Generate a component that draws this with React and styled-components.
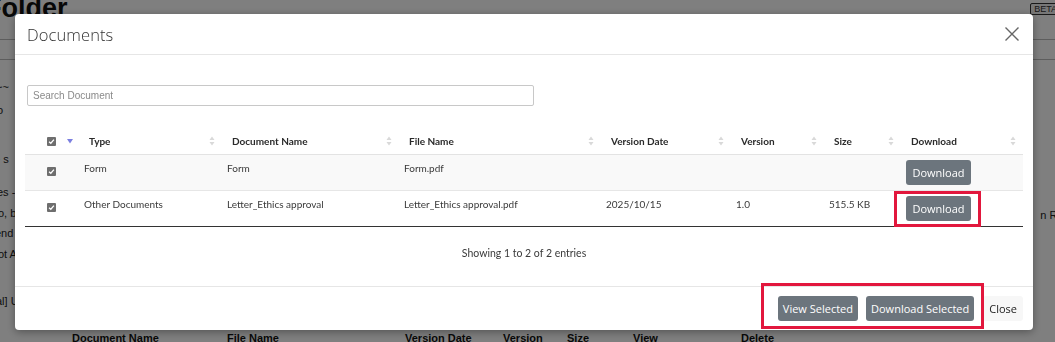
import React from "react";
import styled, { createGlobalStyle } from "styled-components";

const Global = createGlobalStyle`
  html, body { margin: 0; padding: 0; background: #fff; }
  body { font-family: "Liberation Sans", Arial, sans-serif; overflow: hidden; }
  * { box-sizing: border-box; }
`;

/* ---------- background page ---------- */
const Page = styled.div`
  width: 1055px;
  height: 342px;
  overflow: hidden;
  display: flex;
  flex-direction: column;
  background: #fff;
  color: #222;
`;
const TopBar = styled.div`
  height: 40px;
  flex: none;
  display: flex;
  justify-content: space-between;
  align-items: flex-start;
  border-bottom: 1px solid #bbb;
`;
const PageTitle = styled.h1`
  margin: -5px 0 0 -15px;
  font-size: 27px;
  line-height: 1;
  font-weight: 700;
  color: #111;
`;
const Beta = styled.span`
  margin: 3px -6px 0 0;
  padding: 0 3px;
  height: 12px;
  font-size: 9px;
  line-height: 11px;
  border: 1px solid #333;
  border-radius: 2px;
  color: #333;
  background: #eee;
`;
const SubBar = styled.div`
  height: 20px;
  flex: none;
  border-bottom: 1px solid #bbb;
`;
const Content = styled.div`
  flex: 1;
  display: flex;
  justify-content: space-between;
`;
const LeftCol = styled.div`
  display: flex;
  flex-direction: column;
  font-size: 11px;
  line-height: 13px;
`;
const Frag = styled.div`
  margin-top: ${(p) => p.$gap}px;
  margin-left: ${(p) => p.$shift || 0}px;
  white-space: nowrap;
  color: #222;
`;
const RightCol = styled.div`
  padding-top: 149px;
  font-size: 11px;
  margin-right: -17px;
  white-space: nowrap;
`;
const BgTableHead = styled.div`
  height: 14px;
  flex: none;
  display: flex;
  padding-left: 72px;
  font-size: 11px;
  font-weight: 700;
  color: #111;
  margin-bottom: -4px;
`;
const BgTh = styled.div`
  width: ${(p) => p.$w}px;
  flex: none;
  white-space: nowrap;
`;

/* ---------- modal ---------- */
const Overlay = styled.div`
  position: fixed;
  inset: 0;
  background: rgba(0, 0, 0, 0.5);
`;
const Modal = styled.div`
  margin: 14px 0 0 15px;
  width: 1018px;
  height: 316px;
  background: #fff;
  border-radius: 4px;
  box-shadow: 0 2px 8px rgba(0, 0, 0, 0.35);
  display: flex;
  flex-direction: column;
`;
const Header = styled.div`
  height: 41px;
  flex: none;
  display: flex;
  align-items: center;
  justify-content: space-between;
  padding: 0 13px 0 12px;
  border-bottom: 1px solid #e6e6e6;
`;
const Title = styled.h2`
  margin: 0;
  font-family: "Open Sans", sans-serif;
  font-weight: 300;
  font-size: 16.5px;
  color: #333;
  letter-spacing: 0.1px;
`;
const CloseX = styled.button`
  border: 0;
  background: none;
  padding: 0;
  width: 16px;
  height: 16px;
  display: flex;
  cursor: pointer;
`;
const Body = styled.div`
  height: 231px;
  flex: none;
  padding: 30px 10px 0;
  display: flex;
  flex-direction: column;
`;
const Search = styled.input`
  margin-left: 2px;
  width: 507px;
  height: 21px;
  border: 1px solid #c8c8c8;
  border-radius: 2px;
  padding: 0 5px;
  font-family: "Liberation Sans", Arial, sans-serif;
  font-size: 10px;
  color: #333;
  outline: none;
  &::placeholder { color: #8a8a8a; }
`;
const Table = styled.table`
  margin-top: 23px;
  width: 998px;
  table-layout: fixed;
  border-collapse: collapse;
  font-family: "Lato", sans-serif;
  font-size: 10px;
  color: #3a3a3a;
  border-bottom: 1px solid #333;
`;
const Th = styled.th`
  height: 25px;
  padding: 0 7px 0 10px;
  text-align: left;
  font-weight: 700;
  color: #2a2a2a;
  border-bottom: 1px solid #e3e3e3;
`;
const CheckTh = styled(Th)`
  padding: 0 0 0 22px;
`;
const ThInner = styled.div`
  display: flex;
  align-items: center;
  justify-content: space-between;
`;
const CheckInner = styled.div`
  display: flex;
  align-items: center;
  gap: 11px;
`;
const Tr = styled.tr`
  background: ${(p) => (p.$shade ? "#f9f9f9" : "#fff")};
  border-bottom: 1px solid #e6e6e6;
  &:last-child { border-bottom: 0; }
`;
const Td = styled.td`
  height: 36px;
  padding: 6px 5px 5px;
  vertical-align: top;
  line-height: 14px;
  white-space: nowrap;
`;
const CheckTd = styled(Td)`
  padding: 9px 0 0 22px;
`;
const Box = styled.span`
  width: 9px;
  height: 9px;
  border-radius: 1px;
  background: #6e6e6e;
  display: inline-flex;
  align-items: center;
  justify-content: center;
`;
const Btn = styled.button`
  height: 25px;
  padding: 0 ${(p) => (p.$light ? 6 : 5)}px;
  border: 0;
  border-radius: 3px;
  background: ${(p) => (p.$light ? "#f7f7f7" : "#6c757d")};
  color: ${(p) => (p.$light ? "#222" : "#fff")};
  font-family: "Open Sans", sans-serif;
  font-size: 11px;
  white-space: nowrap;
  cursor: pointer;
`;
const RowBtn = styled(Btn)`
  margin-top: -1px;
  width: 65px;
  padding: 0;
`;
const Highlight = styled.span`
  position: relative;
  display: inline-flex;
  gap: 8px;
  &::after {
    content: "";
    position: absolute;
    top: ${(p) => p.$t}px;
    bottom: ${(p) => p.$b}px;
    left: ${(p) => p.$l}px;
    right: ${(p) => p.$r}px;
    border: 3px solid #e2173d;
    pointer-events: none;
  }
`;
const Info = styled.div`
  margin-top: 20px;
  text-align: center;
  font-family: "Lato", sans-serif;
  font-size: 10.5px;
  color: #3a3a3a;
`;
const Footer = styled.div`
  flex: 1;
  display: flex;
  align-items: center;
  justify-content: flex-end;
  gap: 9px;
  padding: 0 10px 1px;
  border-top: 1px solid #e6e6e6;
`;

const Check = () => (
  <Box>
    <svg width="7" height="7" viewBox="0 0 8 8">
      <path d="M1.2 4.2 L3.2 6 L6.8 1.8" fill="none" stroke="#fff" strokeWidth="1.4" />
    </svg>
  </Box>
);

const Sort = () => (
  <svg width="6" height="10" viewBox="0 0 6 10">
    <path d="M3 0.5 L5.5 4 H0.5 Z" fill="#d9d9d9" />
    <path d="M3 9.5 L5.5 6 H0.5 Z" fill="#d9d9d9" />
  </svg>
);

const SortDown = () => (
  <svg width="6" height="5" viewBox="0 0 6 5">
    <path d="M0 0 H6 L3 4.5 Z" fill="#7b7fe0" />
  </svg>
);

const cols = [54, 143, 177, 202, 130, 93, 77, 122];
const heads = ["Type", "Document Name", "File Name", "Version Date", "Version", "Size", "Download"];

const rows = [
  { type: "Form", name: "Form", file: "Form.pdf", date: "", ver: "", size: "", hl: false },
  {
    type: "Other Documents",
    name: "Letter_Ethics approval",
    file: "Letter_Ethics approval.pdf",
    date: "2025/10/15",
    ver: "1.0",
    size: "515.5 KB",
    hl: true,
  },
];

export default function App() {
  return (
    <>
      <Global />
      <Page>
        <TopBar>
          <PageTitle>Folder</PageTitle>
          <Beta>BETA</Beta>
        </TopBar>
        <SubBar />
        <Content>
          <LeftCol>
            <Frag $gap={21} $shift={-4}>~~</Frag>
            <Frag $gap={10} $shift={-3}>o</Frag>
            <Frag $gap={36} $shift={-12}>ne s</Frag>
            <Frag $gap={20} $shift={-3}>es -</Frag>
            <Frag $gap={8} $shift={-2}>o, b</Frag>
            <Frag $gap={7} $shift={-5}>end</Frag>
            <Frag $gap={8} $shift={-2}>ot A</Frag>
            <Frag $gap={34} $shift={-4}>al] U</Frag>
          </LeftCol>
          <RightCol>n REB</RightCol>
        </Content>
        <BgTableHead>
          <BgTh $w={155}>Document Name</BgTh>
          <BgTh $w={178}>File Name</BgTh>
          <BgTh $w={98}>Version Date</BgTh>
          <BgTh $w={64}>Version</BgTh>
          <BgTh $w={66}>Size</BgTh>
          <BgTh $w={108}>View</BgTh>
          <BgTh $w={80}>Delete</BgTh>
        </BgTableHead>
      </Page>

      <Overlay>
        <Modal>
          <Header>
            <Title>Documents</Title>
            <CloseX aria-label="Close">
              <svg width="16" height="16" viewBox="0 0 16 16">
                <path d="M1.5 1.5 L14.5 14.5 M14.5 1.5 L1.5 14.5" stroke="#666" strokeWidth="1.4" />
              </svg>
            </CloseX>
          </Header>
          <Body>
            <Search placeholder="Search Document" />
            <Table>
              <colgroup>
                {cols.map((w, i) => (
                  <col key={i} style={{ width: w }} />
                ))}
              </colgroup>
              <thead>
                <tr>
                  <CheckTh>
                    <CheckInner>
                      <Check />
                      <SortDown />
                    </CheckInner>
                  </CheckTh>
                  {heads.map((h) => (
                    <Th key={h}>
                      <ThInner>
                        <span>{h}</span>
                        <Sort />
                      </ThInner>
                    </Th>
                  ))}
                </tr>
              </thead>
              <tbody>
                {rows.map((r, i) => (
                  <Tr key={i} $shade={i === 0}>
                    <CheckTd>
                      <Check />
                    </CheckTd>
                    <Td>{r.type}</Td>
                    <Td>{r.name}</Td>
                    <Td>{r.file}</Td>
                    <Td>{r.date}</Td>
                    <Td>{r.ver}</Td>
                    <Td>{r.size}</Td>
                    <Td>
                      {r.hl ? (
                        <Highlight $t={-6} $b={-6} $l={-12} $r={-10}>
                          <RowBtn>Download</RowBtn>
                        </Highlight>
                      ) : (
                        <RowBtn>Download</RowBtn>
                      )}
                    </Td>
                  </Tr>
                ))}
              </tbody>
            </Table>
            <Info>Showing 1 to 2 of 2 entries</Info>
          </Body>
          <Footer>
            <Highlight $t={-13} $b={-8} $l={-17} $r={-10}>
              <Btn>View Selected</Btn>
              <Btn>Download Selected</Btn>
            </Highlight>
            <Btn $light>Close</Btn>
          </Footer>
        </Modal>
      </Overlay>
    </>
  );
}
